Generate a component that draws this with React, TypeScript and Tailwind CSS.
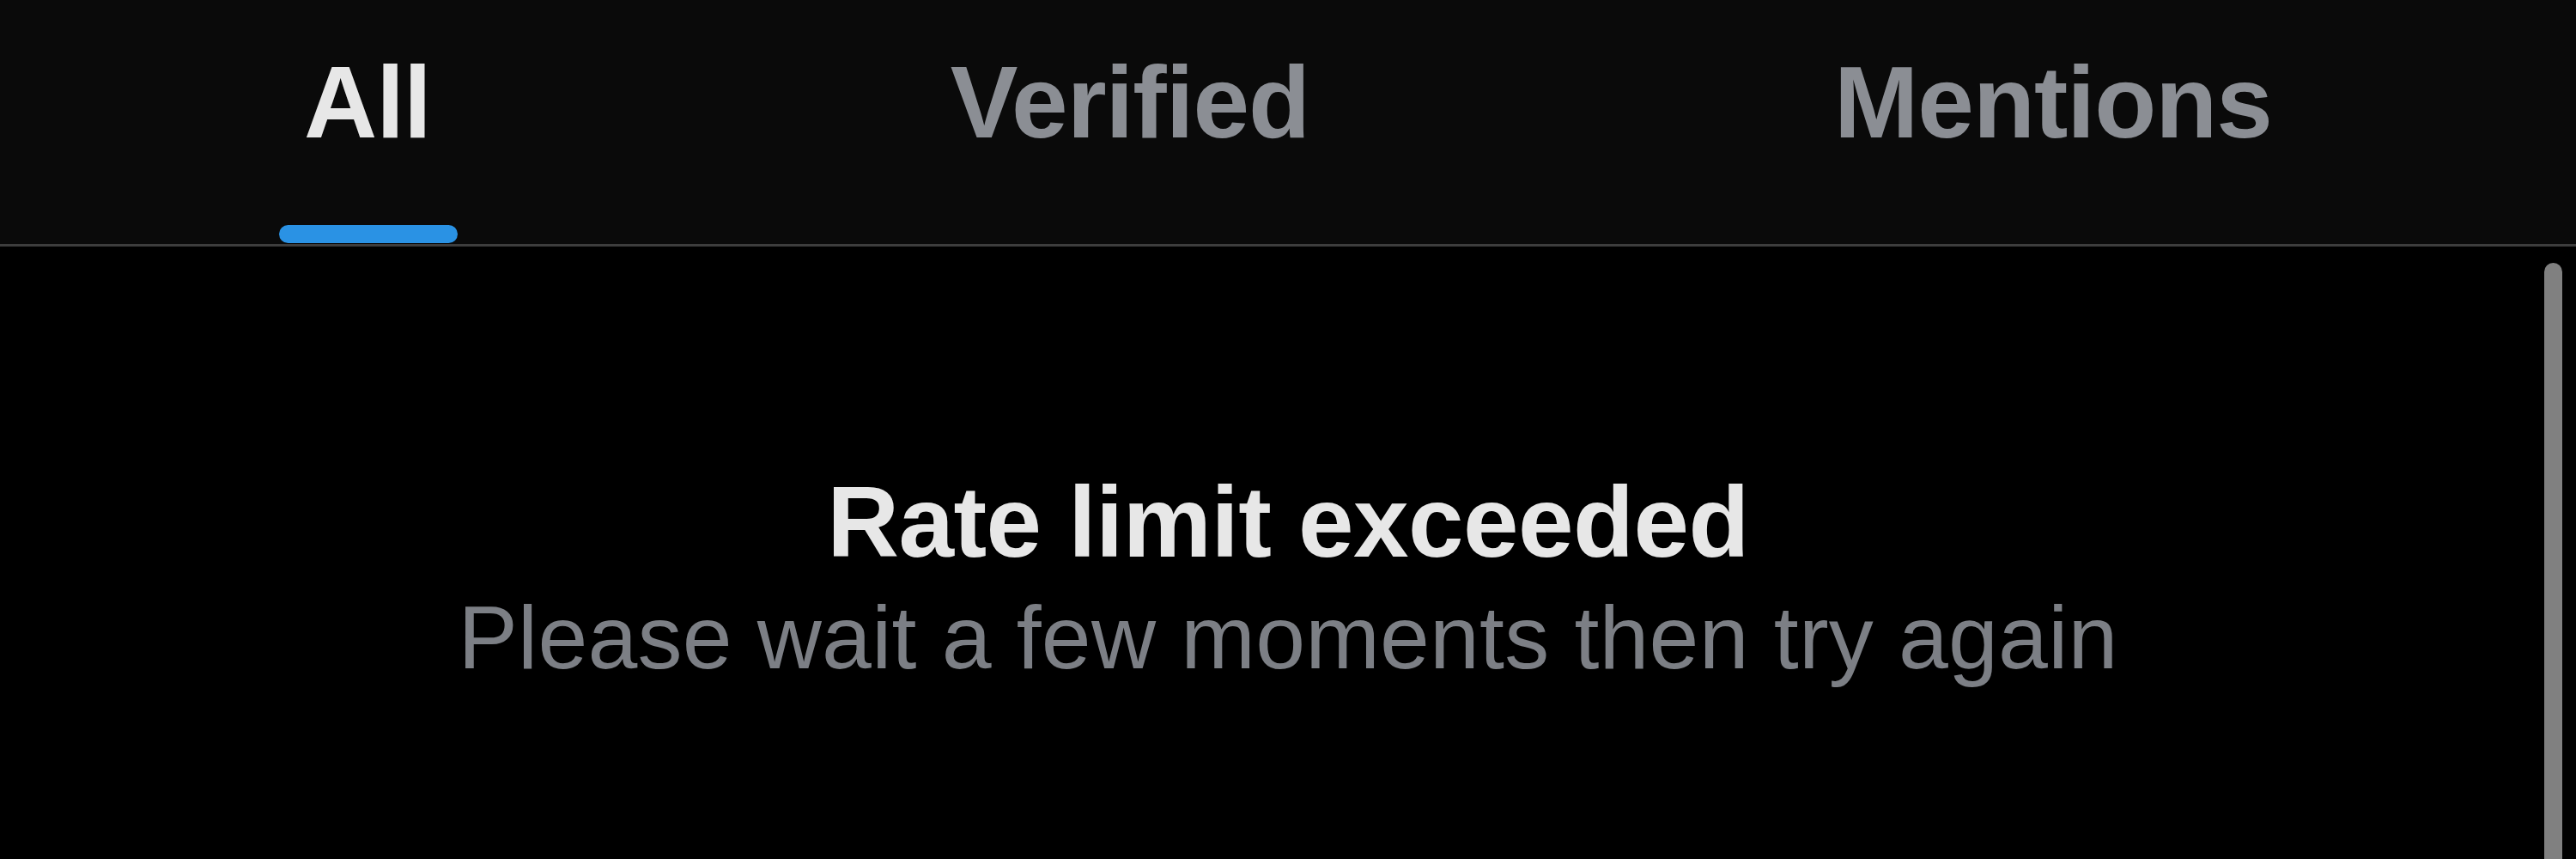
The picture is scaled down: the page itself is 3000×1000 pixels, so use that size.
import React from "react";

const font = { fontFamily: '"Liberation Sans", Arial, Helvetica, sans-serif' };

function Tab({ label, active, width }: { label: string; active?: boolean; width: string }) {
  return (
    <div className={`flex flex-col items-center shrink-0 ${width}`}>
      <div
        className={`pt-[60px] text-[118px] leading-none font-bold tracking-[-1px] ${active ? "text-[#e7e7e7]" : "text-[#8b8e94]"}`}
      >
        {label}
      </div>
      {active ? (
        <div className="mt-[84px] h-[21px] w-[208px] rounded-full bg-[#2a92e4] ml-[2px]" />
      ) : null}
    </div>
  );
}

export default function App() {
  return (
    <div className="w-[3000px] h-[1000px] bg-black overflow-hidden flex flex-col" style={font}>
      <div className="h-[287px] shrink-0 bg-[#0a0a0a] border-b-[3px] border-[#3d3d3d] flex flex-row overflow-hidden">
        <Tab label="All" active width="w-[856px]" />
        <Tab label="Verified" width="w-[920px]" />
        <div className="flex flex-col items-center shrink-0 w-[1220px] pl-[10px]">
          <div className="pt-[60px] text-[118px] leading-none font-bold tracking-[-1px] text-[#8b8e94]">
            Mentions
          </div>
        </div>
      </div>
      <div className="relative flex-1 bg-black flex flex-col items-center">
        <div className="mt-[263px] text-[116px] leading-none font-bold text-[#e7e7e7] tracking-[-0.5px]">
          Rate limit exceeded
        </div>
        <div className="mt-[24px] text-[104px] leading-none text-[#7c7f85] tracking-[0.2px]">
          Please wait a few moments then try again
        </div>
        <div className="absolute right-[16px] top-[19px] bottom-0 w-[21px] rounded-t-full bg-[#808080]" />
      </div>
    </div>
  );
}
